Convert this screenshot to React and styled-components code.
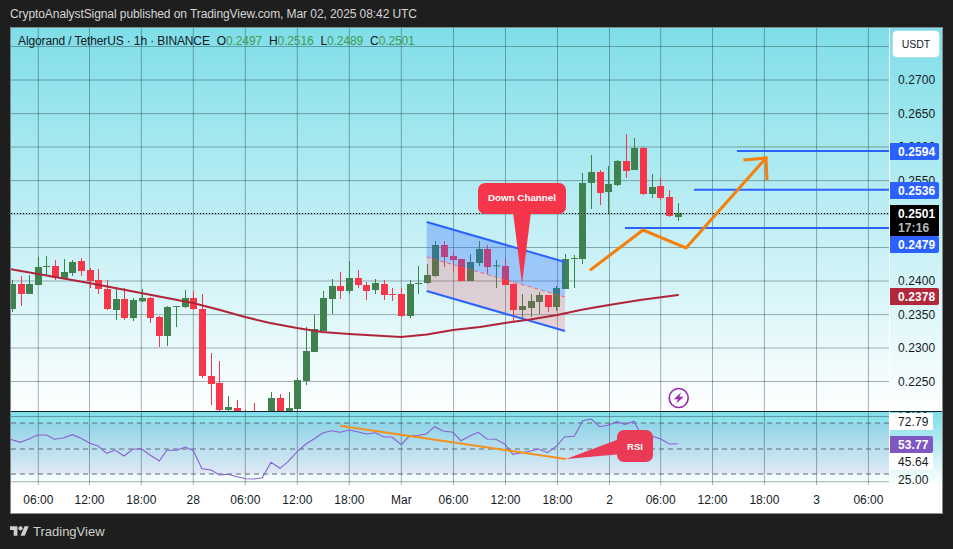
import React from 'react';
import styled, { createGlobalStyle } from 'styled-components';

const Global = createGlobalStyle`
  html, body { margin: 0; padding: 0; background: #1e1e1e; }
  body { font-family: "Liberation Sans", Arial, sans-serif; }
`;

const Page = styled.div`
  width: 953px; height: 549px; background: #1e1e1e; overflow: hidden;
  display: flex; flex-direction: column;
`;
const TopBar = styled.div`
  height: 27px; padding-left: 10px; display: flex; align-items: center;
  color: #d6d6d6; font-size: 12px; letter-spacing: -.08px; white-space: nowrap; box-sizing: border-box;
`;
const Frame = styled.div`
  width: 933px; height: 487px; margin-left: 10px; box-sizing: border-box;
  border: 1px solid #7d8a8c; border-bottom-color: #8c8c8c; border-right-color: #8c8c8c;
  display: grid; grid-template-columns: 878px 53px; grid-template-rows: 383px 74px 28px;
  background: #fff;
`;
const MainPlot = styled.div`
  position: relative; overflow: hidden;
  background: linear-gradient(180deg, #7fdee9 0%, #ffffff 100%);
`;
const PriceAxis = styled.div`
  position: relative; overflow: hidden; box-sizing: border-box; border-left: 1px solid #fff;
  background: linear-gradient(180deg, #7fdee9 0%, #ffffff 100%);
`;
const RsiPlot = styled.div`
  position: relative; overflow: hidden; border-top: 1px solid #12222b;
  background: linear-gradient(180deg, #7fdee9 0%, #ffffff 100%);
`;
const RsiAxis = styled(PriceAxis)`
  border-top: 1px solid #12222b;
`;
const Chart = styled.svg`
  display: block; width: 100%; height: 100%;
`;
const Legend = styled.div`
  position: absolute; left: 7px; top: 6px; display: flex; gap: 7px;
  font-size: 12px; color: #10181c; white-space: nowrap; letter-spacing: -.12px;
`;
const LegendValue = styled.span`
  display: inline-flex;
  & > b { font-weight: 400; color: #429a50; }
`;
const Callout = styled.div`
  position: absolute; display: flex; align-items: center; justify-content: center;
  color: #fff; font-weight: 700; box-sizing: border-box;
`;
const ChannelCallout = styled(Callout)`
  left: 467px; top: 155px; width: 88px; height: 31px; padding-bottom: 2px;
  background: #f5364a; border-radius: 7px; font-size: 9.8px;
`;
const RsiCallout = styled(Callout)`
  left: 606px; top: 18px; width: 36px; height: 32px;
  background: #ea3a56; border-radius: 7px; font-size: 9.5px;
`;
const Tick = styled.div`
  position: absolute; left: 8px; font-size: 12px; line-height: 10px; color: #131a1e; letter-spacing: .1px;
  transform: translateY(-50%); white-space: nowrap;
`;
const Badge = styled.div`
  position: absolute; left: 0; width: ${p => p.$w || 49}px; height: 17px; box-sizing: border-box; padding-left: 8px;
  display: flex; align-items: center; font-size: 12px; letter-spacing: .1px;
  font-weight: ${p => (p.$plain ? 400 : 700)};
  color: ${p => (p.$plain ? '#131a1e' : '#fff')}; background: ${p => p.$bg};
  border-radius: ${p => (p.$plain ? '0' : '0 2px 2px 0')};
`;
const LastPrice = styled.div`
  position: absolute; left: 0; top: 177px; width: 49px; height: 31px; background: #000;
  box-sizing: border-box; padding: 2px 0 0 8px; font-size: 12px; font-weight: 700; line-height: 14px;
  color: #fff; letter-spacing: .1px;
  & > span { display: block; color: #b8b8b8; }
`;
const CurrencyButton = styled.div`
  position: absolute; left: 3px; top: 3px; width: 46px; height: 26px; background: #fff;
  border-radius: 4px; display: flex; align-items: center; justify-content: center;
  font-size: 10.5px; color: #131a1e; box-shadow: 0 0 0 1px rgba(180,225,235,.8);
`;
const TimeAxis = styled.div`
  grid-column: 1 / span 2; position: relative; background: #fff;
`;
const TimeLabel = styled.div`
  position: absolute; top: 8px; font-size: 12px; line-height: 14px; color: #131a1e;
  transform: translateX(-50%); white-space: nowrap;
`;
const Footer = styled.div`
  flex: 1; display: flex; align-items: center; gap: 4px; padding: 0 0 1px 10px;
  color: #cfcfcf; font-size: 13px;
`;

const gridX = [38.3, 89.5, 141.3, 193.3, 245.3, 297.3, 349.3, 401.3, 453.5, 505.5, 557.5, 609.5, 660.7, 712.5, 764.4, 816.6, 868.4];
const timeLabels = ['06:00', '12:00', '18:00', '28', '06:00', '12:00', '18:00', 'Mar', '06:00', '12:00', '18:00', '2', '06:00', '12:00', '18:00', '3', '06:00'];
const gridY = [46.5, 80, 113.6, 147, 180.6, 214, 247.5, 281, 314.6, 348, 381.5];

// [index, colour, wick top, wick bottom, body top, body bottom], measured in page pixels
const seg = (y0, rows) => rows.map(([i, c, wt, wb, bt, bb]) => [i, c, y0 + wt / 3, y0 + wb / 3, y0 + bt / 3, y0 + bb / 3]);
const candles = [
  ...seg(240, [
    [-3,'g',120,216,132,207],[-2,'r',108,198,132,162],[-1,'g',105,162,132,162],[0,'g',51,135,81,135],
    [1,'g',48,108,78,80],[2,'r',60,120,78,114],[3,'g',57,114,96,114],[4,'g',60,108,66,99],
    [5,'r',54,108,63,93],[6,'r',84,144,90,123],[7,'r',87,162,120,147],[8,'r',120,210,147,207],
    [9,'g',141,240,177,210],[10,'r',144,240,177,234],[11,'g',174,243,180,234],[12,'g',147,186,174,184],
    [13,'r',171,249,174,234],[14,'r',228,321,231,288],[15,'g',198,318,201,288],[16,'g',198,261,198,201],
    [17,'g',150,204,174,201],[18,'r',153,210,174,207],[19,'r',162,414,207,408],
  ]),
  ...seg(270, [
    [20,'r',249,405,318,342],[21,'r',273,423,339,420],[22,'g',378,423,411,420],[23,'r',390,424,414,426],
    [24,'r',420,426,430,432],[25,'r',399,426,430,432],[27,'g',366,426,384,426],[28,'r',372,426,384,426],
    [29,'g',366,426,414,426],[30,'g',324,426,330,417],[31,'g',171,345,243,333],[32,'g',135,246,177,246],
    [33,'g',63,183,84,183],[34,'g',27,132,48,87],[35,'r',6,87,48,63],[36,'g',-27,72,24,63],
    [37,'r',0,54,24,45],[38,'r',36,90,45,63],[39,'g',27,72,39,60],[40,'r',30,90,42,75],
    [41,'r',54,93,72,75],
  ]),
  ...seg(120, [
    [42,'r',504,591,522,588],[43,'g',480,594,492,588],[44,'g',438,522,489,492],[45,'g',432,492,465,489],
    [46,'g',363,471,375,468],[47,'r',363,441,375,411],[48,'r',393,456,408,420],[49,'r',417,483,417,483],
    [50,'g',402,483,426,483],[51,'g',363,438,387,429],[52,'r',375,462,387,441],[53,'g',420,504,436,438],
    [54,'r',414,495,438,495],[55,'r',489,603,492,570],[56,'g',522,594,558,570],[57,'g',522,591,543,564],
    [58,'g',516,582,525,546],[59,'r',525,576,525,561],[60,'g',498,573,504,561],[61,'g',402,507,417,507],
    [62,'g',405,504,414,417],[63,'g',159,432,189,417],[64,'g',105,267,156,189],[65,'r',150,255,156,219],
    [66,'g',138,282,192,216],[67,'g',120,198,123,195],[68,'r',42,174,123,153],[69,'g',54,150,84,150],
    [70,'r',81,225,84,222],[71,'g',162,234,201,222],[72,'r',174,240,198,234],[73,'r',210,291,231,288],
    [74,'g',249,303,279,291],
  ]),
];

const maLine = '10,269 38,274 89,283 141,293 193,303 220,310 245,317 270,323 297,328 322,332 349,334 375,335.5 401,337 427,334.5 453,330 480,327 505,323 530,319.5 557,315 583,309.5 609,305 640,300 678,295';

const px = (x0, sx, y0, pts) => pts.map(([x, y]) => `${(x0 + x / sx).toFixed(1)},${(y0 + y / 3).toFixed(1)}`).join(' ');
const rsiLine = px(0, 3, 260, [[30,537],[60,547],[85,538],[113,525],[140,525],[163,538],[190,534],[217,524],[243,535],[268,549],[295,558],[320,580],[345,570],[372,588],[398,568],[424,566],[450,585],[478,603],[500,571],[530,571],[556,561],[580,572],[606,626],[634,630],[658,645],[685,643],[712,650],[737,656],[762,657],[787,653],[813,607],[840,625],[864,605],[892,575],[917,553],[945,535],[968,519],[993,512],[1020,517],[1048,510],[1075,516],[1100,522],[1126,518],[1152,531],[1176,531],[1204,554],[1228,528]])
  + ' ' + px(400, 2.835, 370, [[25,197],[50,197],[75,191],[98,170],[122,183],[150,187],[173,212],[200,197],[222,187],[247,207],[272,208],[298,223],[320,253],[345,248],[370,243],[393,237],[418,248],[445,227],[466,201],[494,199],[518,152],[542,147],[566,170],[590,166],[614,155],[639,163],[663,154],[686,199],[712,197],[738,206],[764,222],[787,221]]);

const GREEN = '#40824f', GREEN_WICK = '#2f8b3b', RED = '#f7364a', BLUE = '#2b62ff', ORANGE = '#f57f0a';
const GRID = 'rgba(35,55,65,.4)';

const Candle = ({ d }) => {
  const [i, c, wt, wb, bt, bb] = d;
  const left = Math.round(38.3 + i * 8.645 - 3.5);
  const body = c === 'g' ? GREEN : RED;
  return (
    <g>
      <rect x={left + 3} y={wt} width="1" height={Math.max(wb - wt, 0)} fill={c === 'g' ? GREEN_WICK : RED} />
      <rect x={left} y={bt} width="7" height={Math.max(bb - bt, 1)} fill={body} />
    </g>
  );
};

const priceTicks = [['0.2700', 80], ['0.2650', 113.6], ['0.2600', 147], ['0.2550', 180.6], ['0.2400', 281], ['0.2350', 315], ['0.2300', 348], ['0.2250', 381.5]];
const priceBadges = [['0.2594', 143, BLUE], ['0.2536', 182, BLUE], ['0.2479', 236, BLUE], ['0.2378', 288, '#b2283a']];

const Logo = () => (
  <svg width="19" height="10" viewBox="0 4 36 18" fill="#cfcfcf">
    <path d="M14 22H7V11H0V4h14v18zM28 22h-8l7.5-18h8L28 22z" />
    <circle cx="20" cy="8" r="4" />
  </svg>
);

export default function App() {
  return (
    <Page>
      <Global />
      <TopBar>CryptoAnalystSignal published on TradingView.com, Mar 02, 2025 08:42 UTC</TopBar>
      <Frame>
        <MainPlot>
          <Chart viewBox="11 28 878 383">
            {gridY.map(y => <line key={y} x1="11" x2="889" y1={y} y2={y} stroke={GRID} />)}
            {gridX.map(x => <line key={x} x1={x} x2={x} y1="28" y2="411" stroke={GRID} />)}
            {candles.map(d => <Candle key={d[0]} d={d} />)}
            <polygon points="426.7,222 565,262 565,297 426.7,257" fill="rgba(41,98,255,.3)" />
            <polygon points="426.7,257 565,297 565,331 426.7,291" fill="rgba(242,54,69,.2)" />
            <line x1="426.7" y1="257" x2="565" y2="297" stroke="#f0505f" strokeWidth="1" strokeDasharray="4 3" opacity=".8" />
            <line x1="426.7" y1="222" x2="565" y2="262" stroke={BLUE} strokeWidth="2" />
            <line x1="426.7" y1="291" x2="565" y2="331" stroke={BLUE} strokeWidth="2" />
            <polyline points={maLine} fill="none" stroke="#b0243a" strokeWidth="2" strokeLinecap="round" />
            <line x1="11" x2="889" y1="213.5" y2="213.5" stroke="#000" strokeDasharray="1 2" />
            <line x1="737" x2="889" y1="151" y2="151" stroke={BLUE} strokeWidth="2" />
            <line x1="694" x2="889" y1="189.8" y2="189.8" stroke={BLUE} strokeWidth="2" />
            <line x1="625" x2="889" y1="228" y2="228" stroke={BLUE} strokeWidth="2" />
            <polygon points="513,212 531,212 522,284" fill="#f5364a" />
            <polyline points="591,269.5 643,230 686,248 766,158" fill="none" stroke={ORANGE} strokeWidth="3" strokeLinejoin="miter" strokeLinecap="round" />
            <polyline points="743.5,160 766,158 767,180" fill="none" stroke={ORANGE} strokeWidth="3" strokeLinecap="butt" />
            <circle cx="678.7" cy="398" r="9.5" fill="none" stroke="#9c27b0" strokeWidth="1.6" />
            <path d="M681 392.5 L673.8 399.2 H678 L676.4 403.5 L683.6 396.8 H679.4 Z" fill="#9c27b0" />
          </Chart>
          <Legend>
            <span>Algorand / TetherUS · 1h · BINANCE</span>
            <LegendValue>O<b>0.2497</b></LegendValue>
            <LegendValue>H<b>0.2516</b></LegendValue>
            <LegendValue>L<b>0.2489</b></LegendValue>
            <LegendValue>C<b>0.2501</b></LegendValue>
          </Legend>
          <ChannelCallout>Down Channel</ChannelCallout>
        </MainPlot>
        <PriceAxis>
          <CurrencyButton>USDT</CurrencyButton>
          {priceTicks.map(([t, y]) => <Tick key={t} style={{ top: y - 28 }}>{t}</Tick>)}
          {priceBadges.map(([t, y, bg]) => <Badge key={t} $bg={bg} style={{ top: y - 28 }}>{t}</Badge>)}
          <LastPrice>0.2501<span>17:16</span></LastPrice>
        </PriceAxis>
        <RsiPlot>
          <Chart viewBox="11 412 878 73">
            <rect x="11" y="423" width="878" height="51" fill="rgba(126,87,194,.1)" />
            <line x1="11" x2="889" y1="416.5" y2="416.5" stroke={GRID} />
            <line x1="11" x2="889" y1="481.7" y2="481.7" stroke={GRID} />
            {gridX.map(x => <line key={x} x1={x} x2={x} y1="412" y2="485" stroke={GRID} />)}
            {[423, 449, 474].map(y => <line key={y} x1="11" x2="889" y1={y} y2={y} stroke="#5f6a72" strokeDasharray="5 4" />)}
            <polyline points={rsiLine} fill="none" stroke="#8a5fcf" strokeWidth="1.1" />
            <line x1="340" y1="425.7" x2="566" y2="459" stroke="#f3911c" strokeWidth="2" />
            <polygon points="566,459 622,438 622,454" fill="#ea3a56" />
          </Chart>
          <RsiCallout>RSI</RsiCallout>
        </RsiPlot>
        <RsiAxis>
          <Tick style={{ top: -3 }}>75.00</Tick>
          <Badge $plain $w={43} $bg="#fff" style={{ top: 1 }}>72.79</Badge>
          <Badge $w={43} $bg="#7e57c2" style={{ top: 24 }}>53.77</Badge>
          <Badge $plain $w={43} $bg="#fff" style={{ top: 41 }}>45.64</Badge>
          <Tick style={{ top: 67.5 }}>25.00</Tick>
        </RsiAxis>
        <TimeAxis>
          {timeLabels.map((t, i) => <TimeLabel key={i} style={{ left: gridX[i] - 11 }}>{t}</TimeLabel>)}
        </TimeAxis>
      </Frame>
      <Footer>
        <Logo />
        <span>TradingView</span>
      </Footer>
    </Page>
  );
}
